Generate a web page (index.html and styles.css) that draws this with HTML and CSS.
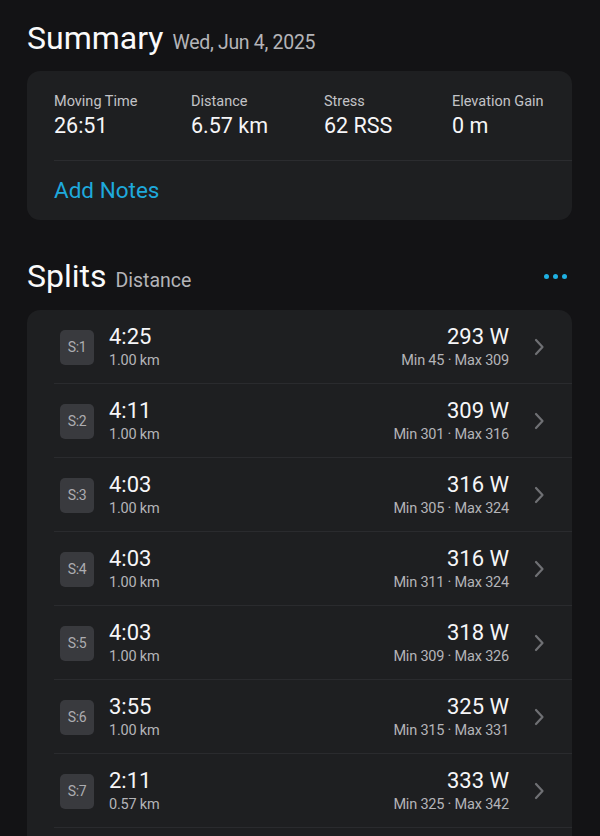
FILE: index.html
```html
<!DOCTYPE html>
<html>
<head>
<meta charset="utf-8">
<link rel="stylesheet" href="styles.css">
</head>
<body>
<div class="page">
  <div class="section-head">
    <h1 class="title">Summary</h1>
    <span class="subtitle">Wed, Jun 4, 2025</span>
  </div>
  <div class="card summary">
    <div class="stats">
      <div class="stat"><div class="label">Moving Time</div><div class="value">26:51</div></div>
      <div class="stat"><div class="label">Distance</div><div class="value">6.57 km</div></div>
      <div class="stat"><div class="label">Stress</div><div class="value">62 RSS</div></div>
      <div class="stat"><div class="label">Elevation Gain</div><div class="value">0 m</div></div>
    </div>
    <div class="notes">Add Notes</div>
  </div>

  <div class="section-head splits-head">
    <h1 class="title">Splits</h1>
    <span class="subtitle sm">Distance</span>
    <span class="dots"><i></i><i></i><i></i></span>
  </div>
  <div class="card splits">
    <div class="row">
      <div class="badge">S:1</div>
      <div class="left"><div class="main">4:25</div><div class="sub">1.00 km</div></div>
      <div class="right"><div class="main">293 W</div><div class="sub">Min 45 · Max 309</div></div>
      <svg class="chev" viewBox="0 0 12 18"><path d="M3 2 L9.5 9 L3 16" fill="none" stroke="#6f7074" stroke-width="2.2" stroke-linecap="round" stroke-linejoin="round"/></svg>
    </div>
    <div class="row">
      <div class="badge">S:2</div>
      <div class="left"><div class="main">4:11</div><div class="sub">1.00 km</div></div>
      <div class="right"><div class="main">309 W</div><div class="sub">Min 301 · Max 316</div></div>
      <svg class="chev" viewBox="0 0 12 18"><path d="M3 2 L9.5 9 L3 16" fill="none" stroke="#6f7074" stroke-width="2.2" stroke-linecap="round" stroke-linejoin="round"/></svg>
    </div>
    <div class="row">
      <div class="badge">S:3</div>
      <div class="left"><div class="main">4:03</div><div class="sub">1.00 km</div></div>
      <div class="right"><div class="main">316 W</div><div class="sub">Min 305 · Max 324</div></div>
      <svg class="chev" viewBox="0 0 12 18"><path d="M3 2 L9.5 9 L3 16" fill="none" stroke="#6f7074" stroke-width="2.2" stroke-linecap="round" stroke-linejoin="round"/></svg>
    </div>
    <div class="row">
      <div class="badge">S:4</div>
      <div class="left"><div class="main">4:03</div><div class="sub">1.00 km</div></div>
      <div class="right"><div class="main">316 W</div><div class="sub">Min 311 · Max 324</div></div>
      <svg class="chev" viewBox="0 0 12 18"><path d="M3 2 L9.5 9 L3 16" fill="none" stroke="#6f7074" stroke-width="2.2" stroke-linecap="round" stroke-linejoin="round"/></svg>
    </div>
    <div class="row">
      <div class="badge">S:5</div>
      <div class="left"><div class="main">4:03</div><div class="sub">1.00 km</div></div>
      <div class="right"><div class="main">318 W</div><div class="sub">Min 309 · Max 326</div></div>
      <svg class="chev" viewBox="0 0 12 18"><path d="M3 2 L9.5 9 L3 16" fill="none" stroke="#6f7074" stroke-width="2.2" stroke-linecap="round" stroke-linejoin="round"/></svg>
    </div>
    <div class="row">
      <div class="badge">S:6</div>
      <div class="left"><div class="main">3:55</div><div class="sub">1.00 km</div></div>
      <div class="right"><div class="main">325 W</div><div class="sub">Min 315 · Max 331</div></div>
      <svg class="chev" viewBox="0 0 12 18"><path d="M3 2 L9.5 9 L3 16" fill="none" stroke="#6f7074" stroke-width="2.2" stroke-linecap="round" stroke-linejoin="round"/></svg>
    </div>
    <div class="row">
      <div class="badge">S:7</div>
      <div class="left"><div class="main">2:11</div><div class="sub">0.57 km</div></div>
      <div class="right"><div class="main">333 W</div><div class="sub">Min 325 · Max 342</div></div>
      <svg class="chev" viewBox="0 0 12 18"><path d="M3 2 L9.5 9 L3 16" fill="none" stroke="#6f7074" stroke-width="2.2" stroke-linecap="round" stroke-linejoin="round"/></svg>
    </div>
  </div>
</div>
</body>
</html>
```
FILE: styles.css
```css
html, body {
  margin: 0;
  padding: 0;
  background: #131315;
  height: 836px;
  overflow: hidden;
}
body {
  font-family: Roboto, "Liberation Sans", sans-serif;
  color: #f4f4f6;
}
.page {
  padding: 18px 28px 0 27px;
}
.section-head {
  display: flex;
  align-items: baseline;
  gap: 9px;
  height: 40px;
}
.title {
  margin: 0;
  font-size: 32px;
  font-weight: 400;
  line-height: 40px;
  letter-spacing: 0;
  color: #fafafa;
}
.subtitle {
  font-size: 19.5px;
  color: #b4b4b8;
  letter-spacing: -0.3px;
}
.subtitle.sm {
  font-size: 19.5px;
  letter-spacing: 0;
}
.card {
  background: #1e1f21;
  border-radius: 13px;
}
.summary {
  margin-top: 13px;
  height: 149px;
  padding-left: 27px;
  box-sizing: border-box;
}
.stats {
  display: grid;
  grid-template-columns: 137px 133px 128px 1fr;
  padding-top: 21px;
  border-bottom: 1px solid #2b2c2f;
  box-sizing: border-box;
  height: 90px;
}
.label {
  font-size: 14.5px;
  color: #c3c3c7;
  line-height: 20px;
}
.value {
  font-size: 21.5px;
  line-height: 28px;
  color: #f6f6f8;
}
.notes {
  font-size: 22.5px;
  color: #1ea9dc;
  line-height: 58px;
}
.splits-head {
  margin-top: 36px;
}
.dots {
  margin-left: auto;
  display: flex;
  gap: 4px;
  align-self: center;
  margin-right: 5px;
}
.dots i {
  width: 5px;
  height: 5px;
  border-radius: 50%;
  background: #1fb0e2;
}
.splits {
  margin-top: 14px;
  border-radius: 13px 13px 0 0;
  padding-bottom: 40px;
}
.row {
  display: flex;
  align-items: center;
  height: 74px;
  padding-left: 33px;
  padding-right: 27px;
  position: relative;
  box-sizing: border-box;
}
.row::after {
  content: "";
  position: absolute;
  left: 27px;
  right: 0;
  bottom: 0;
  height: 1px;
  background: #2a2b2e;
}
.badge {
  width: 34px;
  height: 35px;
  border-radius: 5px;
  background: #393a3e;
  color: #adadb1;
  font-size: 14px;
  display: flex;
  align-items: center;
  justify-content: center;
  letter-spacing: -0.3px;
  margin-right: 15px;
}
.left, .right {
  display: flex;
  flex-direction: column;
  gap: 2px;
}
.right {
  margin-left: auto;
  align-items: flex-end;
  margin-right: 24px;
}
.main {
  font-size: 22px;
  line-height: 25px;
  color: #f6f6f8;
}
.sub {
  font-size: 14.5px;
  line-height: 20px;
  color: #b4b4b8;
  letter-spacing: -0.2px;
}
.chev {
  width: 12px;
  height: 18px;
}
```
